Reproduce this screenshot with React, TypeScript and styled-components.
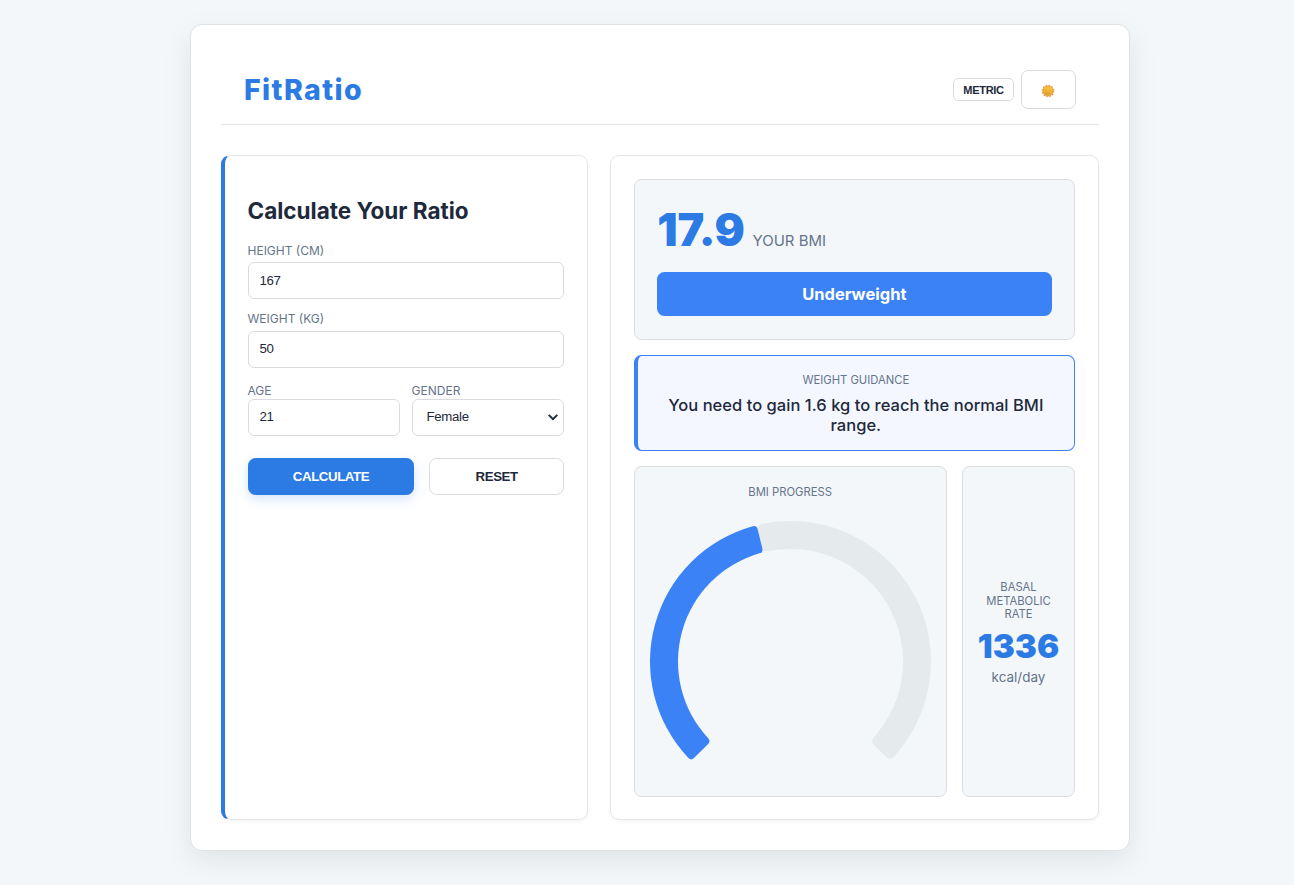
import React from "react";
import styled, { createGlobalStyle } from "styled-components";

const PRIMARY = "#2c7be5";
const STATUS = "#3b82f6";
const TEXT = "#1e293b";
const MUTED = "#64748b";

const GlobalStyle = createGlobalStyle`
  * { box-sizing: border-box; }
  html { font-size: 15px; }
  body {
    margin: 0;
    min-height: 885px;
    background: #f4f7fa;
    color: ${TEXT};
    font-family: Inter, "Liberation Sans", sans-serif;
    overflow: hidden;
  }
  button, input, select { font-family: "Liberation Sans", Arial, sans-serif; color: ${TEXT}; }
`;

const Container = styled.main`
  width: 940px;
  height: 827px;
  margin: 24px 0 0 190px;
  padding: 30px;
  background: #fff;
  border: 1px solid #dfe2e5;
  border-radius: 12px;
  box-shadow: 0 10px 30px rgba(0, 0, 0, 0.08);
`;

const Header = styled.header`
  display: flex;
  align-items: center;
  justify-content: space-between;
  height: 70px;
  padding: 0 23px;
  border-bottom: 1px solid #e2e4e7;
`;

const Logo = styled.h1`
  margin: 0;
  font-size: 28.5px;
  line-height: 36px;
  font-weight: 800;
  letter-spacing: 1.4px;
  color: ${PRIMARY};
`;

const Controls = styled.div`
  display: flex;
  align-items: center;
  gap: 7px;
`;

const UnitButton = styled.button`
  width: 61px;
  height: 23px;
  padding: 0;
  font-size: 11px;
  font-weight: 700;
  letter-spacing: -0.3px;
  background: #fff;
  border: 1px solid #d9dbde;
  border-radius: 5px;
`;

const ThemeButton = styled.button`
  display: flex;
  align-items: center;
  justify-content: center;
  width: 55px;
  height: 39px;
  padding: 2px 0 0;
  background: #fff;
  border: 1px solid #d9dbde;
  border-radius: 7px;
`;

const Columns = styled.div`
  display: grid;
  grid-template-columns: 3fr 4fr;
  gap: 22.5px;
  height: 665px;
  margin-top: 30px;
`;

const Panel = styled.section<{ $accent?: boolean }>`
  display: flex;
  flex-direction: column;
  min-width: 0;
  padding: 22.5px 23px 22.5px 22.5px;
  background: #fff;
  border: 1px solid #e4e6e8;
  border-left: ${(p) => (p.$accent ? `4px solid ${PRIMARY}` : "1px solid #e4e6e8")};
  border-radius: 9px;
  box-shadow: 0 2px 5px rgba(0, 0, 0, 0.04);
`;

const Title = styled.h2`
  margin: 18.1px 0 18.1px;
  font-size: 22.5px;
  line-height: 28px;
  font-weight: 650;
`;

const Label = styled.label<{ $tight?: boolean }>`
  display: block;
  margin-bottom: ${(p) => (p.$tight ? "1px" : "4.5px")};
  font-size: 12px;
  line-height: 15px;
  color: ${MUTED};
`;

const Field = styled.div`
  margin-bottom: 12px;
`;

const Input = styled.input`
  display: block;
  width: 100%;
  height: 37px;
  padding: 0 11px 1px;
  font-size: 13.25px;
  letter-spacing: -0.35px;
  background: #fff;
  border: 1px solid #d9dbde;
  border-radius: 6px;
  outline: none;
`;

const SelectWrap = styled.div`
  position: relative;
`;

const Select = styled.select`
  display: block;
  width: 100%;
  height: 37px;
  padding: 0 24px 2px 14px;
  font-size: 13.25px;
  letter-spacing: -0.35px;
  appearance: none;
  background: #fff;
  border: 1px solid #d9dbde;
  border-radius: 6px;
`;

const Chevron = styled.svg`
  position: absolute;
  top: 14px;
  right: 5px;
  pointer-events: none;
`;

const Pair = styled.div`
  display: grid;
  grid-template-columns: 1fr 1fr;
  gap: 12px;
  margin-top: 3px;
`;

const Actions = styled.div`
  display: grid;
  grid-template-columns: 166px 135px;
  justify-content: space-between;
  margin-top: 22px;
`;

const ActionButton = styled.button<{ $primary?: boolean }>`
  height: 37px;
  padding: 0 0 0 1px;
  font-size: 13.25px;
  font-weight: 700;
  letter-spacing: -0.4px;
  color: ${(p) => (p.$primary ? "#fff" : TEXT)};
  background: ${(p) => (p.$primary ? PRIMARY : "#fff")};
  border: 1px solid ${(p) => (p.$primary ? PRIMARY : "#d9dbde")};
  border-radius: 7.5px;
  box-shadow: ${(p) => (p.$primary ? "0 4px 12px rgba(44, 123, 229, 0.2)" : "none")};
`;

const Card = styled.div`
  background: #f4f7fa;
  border: 1px solid #d9dde1;
  border-radius: 7.5px;
`;

const ScoreCard = styled(Card)`
  height: 161px;
  padding: 22.5px;
`;

const Score = styled.div`
  display: flex;
  align-items: baseline;
  gap: 7.5px;
  height: 70px;
`;

const ScoreValue = styled.span`
  font-size: 45px;
  line-height: 56px;
  font-weight: 900;
  color: ${PRIMARY};
`;

const ScoreLabel = styled.span`
  font-size: 15px;
  color: ${MUTED};
`;

const Status = styled.div`
  height: 44px;
  font-size: 16.5px;
  line-height: 44px;
  font-weight: 700;
  text-align: center;
  color: #fff;
  background: ${STATUS};
  border-radius: 7.5px;
`;

const Guidance = styled.div`
  height: 96px;
  margin-top: 15px;
  padding: 18px 22px 0;
  text-align: center;
  background: #f4f7ff;
  border: 1px solid ${STATUS};
  border-left-width: 4px;
  border-radius: 7.5px;
`;

const Caption = styled.div`
  font-size: 11.25px;
  line-height: 13.5px;
  text-align: center;
  color: ${MUTED};
`;

const Advice = styled.p`
  margin: 8px 0 0;
  font-size: 16.5px;
  line-height: 20px;
  font-weight: 550;
  letter-spacing: 0.03px;
`;

const Metrics = styled.div`
  display: grid;
  grid-template-columns: 313px 113px;
  justify-content: space-between;
  height: 331px;
  margin-top: 15px;
`;

const GaugeCard = styled(Card)`
  padding: 19.5px 15px 0;
`;

const Gauge = styled.svg`
  display: block;
  width: 281px;
  height: 262px;
  margin-top: 21.5px;
`;

const RateCard = styled(Card)`
  display: flex;
  flex-direction: column;
  align-items: center;
  justify-content: center;
  padding: 6px 15px 0;
`;

const RateValue = styled.div`
  margin-top: 3px;
  font-size: 33px;
  line-height: 42px;
  font-weight: 900;
  color: ${PRIMARY};
`;

const RateUnit = styled.div`
  font-size: 13.5px;
  line-height: 20px;
  color: ${MUTED};
`;

/* Ring segment with rounded corners; angles are degrees clockwise from the top. */
function segment(from: number, to: number, outer: number, inner: number, r: number) {
  const c = 140.5;
  const pt = (deg: number, radius: number) => {
    const a = ((deg - 90) * Math.PI) / 180;
    return `${(c + radius * Math.cos(a)).toFixed(2)} ${(c + radius * Math.sin(a)).toFixed(2)}`;
  };
  const dO = (r / outer) * (180 / Math.PI);
  const dI = (r / inner) * (180 / Math.PI);
  const large = to - from > 180 ? 1 : 0;
  return [
    `M${pt(from + dO, outer)}`,
    `A${outer} ${outer} 0 ${large} 1 ${pt(to - dO, outer)}`,
    `Q${pt(to, outer)} ${pt(to, outer - r)}`,
    `L${pt(to, inner + r)}`,
    `Q${pt(to, inner)} ${pt(to - dI, inner)}`,
    `A${inner} ${inner} 0 ${large} 0 ${pt(from + dI, inner)}`,
    `Q${pt(from, inner)} ${pt(from, inner + r)}`,
    `L${pt(from, outer - r)}`,
    `Q${pt(from, outer)} ${pt(from + dO, outer)}Z`,
  ].join("");
}

function SunIcon() {
  return (
    <svg width="15" height="14" viewBox="0 0 15 14" aria-hidden="true">
      <defs>
        <linearGradient id="sun" x1="0.6" y1="0" x2="0.4" y2="1">
          <stop offset="0" stopColor="#fdcb38" />
          <stop offset="1" stopColor="#dc9a2e" />
        </linearGradient>
      </defs>
      <circle cx="7" cy="7" r="5.8" fill="none" stroke="#f08c3c" strokeWidth="1.1" strokeDasharray="1.5 1.536" />
      <circle cx="7" cy="7" r="5.1" fill="url(#sun)" stroke="#ee9430" strokeWidth="0.8" />
    </svg>
  );
}

export default function App() {
  const split = -135 + (17.9 / 40) * 270;
  return (
    <>
      <GlobalStyle />
      <Container>
        <Header>
          <Logo>FitRatio</Logo>
          <Controls>
            <UnitButton>METRIC</UnitButton>
            <ThemeButton aria-label="Toggle theme">
              <SunIcon />
            </ThemeButton>
          </Controls>
        </Header>
        <Columns>
          <Panel $accent>
            <Title>Calculate Your Ratio</Title>
            <Field>
              <Label htmlFor="height">HEIGHT (CM)</Label>
              <Input id="height" defaultValue="167" />
            </Field>
            <Field>
              <Label htmlFor="weight">WEIGHT (KG)</Label>
              <Input id="weight" defaultValue="50" />
            </Field>
            <Pair>
              <div>
                <Label $tight htmlFor="age">AGE</Label>
                <Input id="age" defaultValue="21" />
              </div>
              <div>
                <Label $tight htmlFor="gender">GENDER</Label>
                <SelectWrap>
                  <Select id="gender" defaultValue="Female">
                    <option>Male</option>
                    <option>Female</option>
                  </Select>
                  <Chevron width="12" height="8" viewBox="0 0 12 8">
                    <path d="M1.7 1.9 6 6.1l4.3-4.2" fill="none" stroke={TEXT} strokeWidth="2" />
                  </Chevron>
                </SelectWrap>
              </div>
            </Pair>
            <Actions>
              <ActionButton $primary>CALCULATE</ActionButton>
              <ActionButton>RESET</ActionButton>
            </Actions>
          </Panel>
          <Panel>
            <ScoreCard>
              <Score>
                <ScoreValue>17.9</ScoreValue>
                <ScoreLabel>YOUR BMI</ScoreLabel>
              </Score>
              <Status>Underweight</Status>
            </ScoreCard>
            <Guidance>
              <Caption>WEIGHT GUIDANCE</Caption>
              <Advice>You need to gain 1.6 kg to reach the normal BMI range.</Advice>
            </Guidance>
            <Metrics>
              <GaugeCard>
                <Caption>BMI PROGRESS</Caption>
                <Gauge viewBox="0 0 281 262">
                  <path d={segment(split, 135, 140.5, 112.5, 6)} fill="#e5eaed" />
                  <path d={segment(-135, split + 0.2, 140.5, 112.5, 4)} fill={STATUS} />
                </Gauge>
              </GaugeCard>
              <RateCard>
                <Caption>BASAL METABOLIC RATE</Caption>
                <RateValue>1336</RateValue>
                <RateUnit>kcal/day</RateUnit>
              </RateCard>
            </Metrics>
          </Panel>
        </Columns>
      </Container>
    </>
  );
}
